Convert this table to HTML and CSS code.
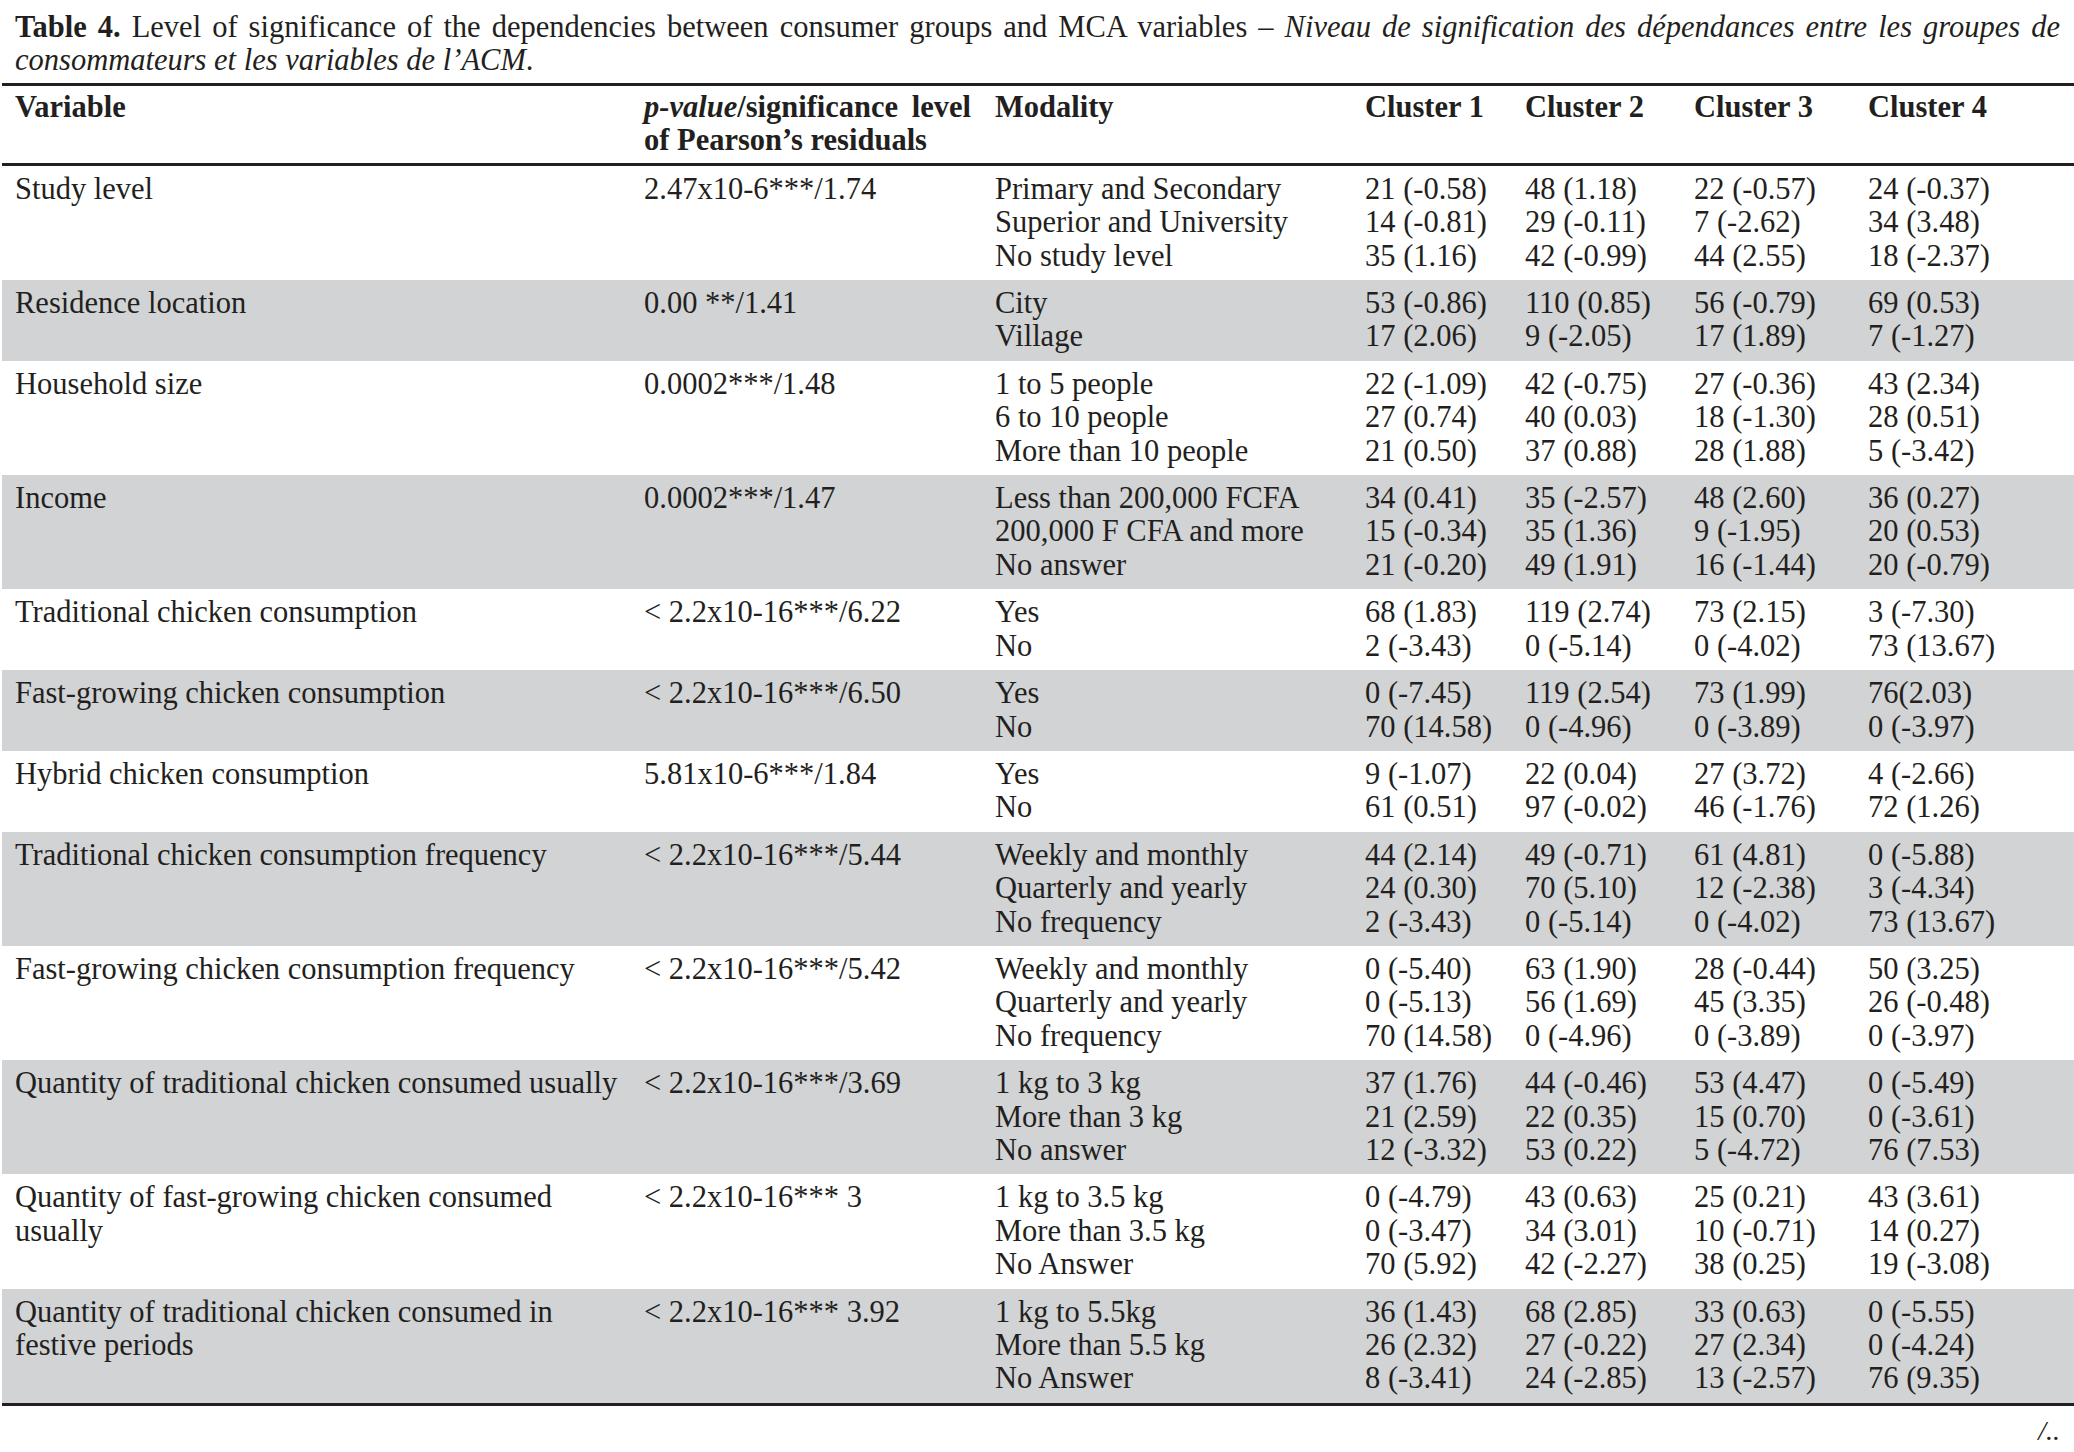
FILE: index.html
```html
<!DOCTYPE html>
<html lang="en">
<head>
<meta charset="utf-8">
<title>Table 4</title>
<link rel="stylesheet" href="styles.css">
</head>
<body>
<div class="page">
  <p class="caption"><b>Table 4.</b> <span>Level of significance of the dependencies between consumer groups and MCA variables –</span> <i>Niveau de signification des dépendances entre les groupes de</i> <i>consommateurs et les variables de l’ACM</i>.</p>
  <table class="data">
    <colgroup>
      <col class="c-var"><col class="c-p"><col class="c-mod"><col class="c-k1"><col class="c-k2"><col class="c-k3"><col class="c-k4">
    </colgroup>
    <thead>
      <tr>
        <th class="first">Variable</th>
        <th class="just"><i>p-value</i><span>/significance level</span> <span>of Pearson’s residuals</span></th>
        <th>Modality</th>
        <th>Cluster 1</th>
        <th>Cluster 2</th>
        <th>Cluster 3</th>
        <th>Cluster 4</th>
      </tr>
    </thead>
    <tbody>
      <tr>
        <td class="first">Study level</td>
        <td>2.47x10-6***/1.74</td>
        <td class="nw">Primary and Secondary<br>Superior and University<br>No study level</td>
        <td class="nw">21 (-0.58)<br>14 (-0.81)<br>35 (1.16)</td>
        <td class="nw">48 (1.18)<br>29 (-0.11)<br>42 (-0.99)</td>
        <td class="nw">22 (-0.57)<br>7 (-2.62)<br>44 (2.55)</td>
        <td class="nw">24 (-0.37)<br>34 (3.48)<br>18 (-2.37)</td>
      </tr>
      <tr class="shade">
        <td class="first">Residence location</td>
        <td>0.00 **/1.41</td>
        <td class="nw">City<br>Village</td>
        <td class="nw">53 (-0.86)<br>17 (2.06)</td>
        <td class="nw">110 (0.85)<br>9 (-2.05)</td>
        <td class="nw">56 (-0.79)<br>17 (1.89)</td>
        <td class="nw">69 (0.53)<br>7 (-1.27)</td>
      </tr>
      <tr>
        <td class="first">Household size</td>
        <td>0.0002***/1.48</td>
        <td class="nw">1 to 5 people<br>6 to 10 people<br>More than 10 people</td>
        <td class="nw">22 (-1.09)<br>27 (0.74)<br>21 (0.50)</td>
        <td class="nw">42 (-0.75)<br>40 (0.03)<br>37 (0.88)</td>
        <td class="nw">27 (-0.36)<br>18 (-1.30)<br>28 (1.88)</td>
        <td class="nw">43 (2.34)<br>28 (0.51)<br>5 (-3.42)</td>
      </tr>
      <tr class="shade">
        <td class="first">Income</td>
        <td>0.0002***/1.47</td>
        <td class="nw">Less than 200,000 FCFA<br>200,000 F CFA and more<br>No answer</td>
        <td class="nw">34 (0.41)<br>15 (-0.34)<br>21 (-0.20)</td>
        <td class="nw">35 (-2.57)<br>35 (1.36)<br>49 (1.91)</td>
        <td class="nw">48 (2.60)<br>9 (-1.95)<br>16 (-1.44)</td>
        <td class="nw">36 (0.27)<br>20 (0.53)<br>20 (-0.79)</td>
      </tr>
      <tr>
        <td class="first">Traditional chicken consumption</td>
        <td>&lt; 2.2x10-16***/6.22</td>
        <td class="nw">Yes<br>No</td>
        <td class="nw">68 (1.83)<br>2 (-3.43)</td>
        <td class="nw">119 (2.74)<br>0 (-5.14)</td>
        <td class="nw">73 (2.15)<br>0 (-4.02)</td>
        <td class="nw">3 (-7.30)<br>73 (13.67)</td>
      </tr>
      <tr class="shade">
        <td class="first">Fast-growing chicken consumption</td>
        <td>&lt; 2.2x10-16***/6.50</td>
        <td class="nw">Yes<br>No</td>
        <td class="nw">0 (-7.45)<br>70 (14.58)</td>
        <td class="nw">119 (2.54)<br>0 (-4.96)</td>
        <td class="nw">73 (1.99)<br>0 (-3.89)</td>
        <td class="nw">76(2.03)<br>0 (-3.97)</td>
      </tr>
      <tr>
        <td class="first">Hybrid chicken consumption</td>
        <td>5.81x10-6***/1.84</td>
        <td class="nw">Yes<br>No</td>
        <td class="nw">9 (-1.07)<br>61 (0.51)</td>
        <td class="nw">22 (0.04)<br>97 (-0.02)</td>
        <td class="nw">27 (3.72)<br>46 (-1.76)</td>
        <td class="nw">4 (-2.66)<br>72 (1.26)</td>
      </tr>
      <tr class="shade">
        <td class="first">Traditional chicken consumption frequency</td>
        <td>&lt; 2.2x10-16***/5.44</td>
        <td class="nw">Weekly and monthly<br>Quarterly and yearly<br>No frequency</td>
        <td class="nw">44 (2.14)<br>24 (0.30)<br>2 (-3.43)</td>
        <td class="nw">49 (-0.71)<br>70 (5.10)<br>0 (-5.14)</td>
        <td class="nw">61 (4.81)<br>12 (-2.38)<br>0 (-4.02)</td>
        <td class="nw">0 (-5.88)<br>3 (-4.34)<br>73 (13.67)</td>
      </tr>
      <tr>
        <td class="first">Fast-growing chicken consumption frequency</td>
        <td>&lt; 2.2x10-16***/5.42</td>
        <td class="nw">Weekly and monthly<br>Quarterly and yearly<br>No frequency</td>
        <td class="nw">0 (-5.40)<br>0 (-5.13)<br>70 (14.58)</td>
        <td class="nw">63 (1.90)<br>56 (1.69)<br>0 (-4.96)</td>
        <td class="nw">28 (-0.44)<br>45 (3.35)<br>0 (-3.89)</td>
        <td class="nw">50 (3.25)<br>26 (-0.48)<br>0 (-3.97)</td>
      </tr>
      <tr class="shade">
        <td class="first">Quantity of traditional chicken consumed usually</td>
        <td>&lt; 2.2x10-16***/3.69</td>
        <td class="nw">1 kg to 3 kg<br>More than 3 kg<br>No answer</td>
        <td class="nw">37 (1.76)<br>21 (2.59)<br>12 (-3.32)</td>
        <td class="nw">44 (-0.46)<br>22 (0.35)<br>53 (0.22)</td>
        <td class="nw">53 (4.47)<br>15 (0.70)<br>5 (-4.72)</td>
        <td class="nw">0 (-5.49)<br>0 (-3.61)<br>76 (7.53)</td>
      </tr>
      <tr>
        <td class="first"><span>Quantity of fast-growing chicken consumed</span> <span>usually</span></td>
        <td>&lt; 2.2x10-16*** 3</td>
        <td class="nw">1 kg to 3.5 kg<br>More than 3.5 kg<br>No Answer</td>
        <td class="nw">0 (-4.79)<br>0 (-3.47)<br>70 (5.92)</td>
        <td class="nw">43 (0.63)<br>34 (3.01)<br>42 (-2.27)</td>
        <td class="nw">25 (0.21)<br>10 (-0.71)<br>38 (0.25)</td>
        <td class="nw">43 (3.61)<br>14 (0.27)<br>19 (-3.08)</td>
      </tr>
      <tr class="shade">
        <td class="first"><span>Quantity of traditional chicken consumed in</span> <span>festive periods</span></td>
        <td>&lt; 2.2x10-16*** 3.92</td>
        <td class="nw">1 kg to 5.5kg<br>More than 5.5 kg<br>No Answer</td>
        <td class="nw">36 (1.43)<br>26 (2.32)<br>8 (-3.41)</td>
        <td class="nw">68 (2.85)<br>27 (-0.22)<br>24 (-2.85)</td>
        <td class="nw">33 (0.63)<br>27 (2.34)<br>13 (-2.57)</td>
        <td class="nw">0 (-5.55)<br>0 (-4.24)<br>76 (9.35)</td>
      </tr>
    </tbody>
  </table>
  <p class="cont">/..</p>
</div>
</body>
</html>
```

FILE: styles.css
```css
html, body {
  margin: 0;
  padding: 0;
  background: #ffffff;
}

.page {
  width: 2074px;
  padding-top: 11px;
  font-family: "Liberation Serif", "Times New Roman", serif;
  font-size: 30.5px;
  line-height: 33.4px;
  color: #231f20;
}

.caption {
  margin: 0 14px 6px 15px;
  line-height: 33px;
  text-align: justify;
}

.caption b {
  font-weight: bold;
}

.data {
  margin-left: 2px;
  width: 2072px;
  table-layout: fixed;
  border-collapse: collapse;
  border-top: 3px solid #231f20;
  border-bottom: 3px solid #231f20;
}

.c-var { width: 629px; }
.c-p { width: 351px; }
.c-mod { width: 370px; }
.c-k1 { width: 160px; }
.c-k2 { width: 169px; }
.c-k3 { width: 174px; }
.c-k4 { width: 219px; }

.data th,
.data td {
  text-align: left;
  vertical-align: top;
  padding: 7px 11px 7px 13px;
}

.data thead th {
  font-weight: bold;
  padding-top: 5px;
  padding-bottom: 5px;
  border-bottom: 3px solid #231f20;
}

.data th.just {
  text-align: justify;
}

.data .first {
  padding-right: 4px;
}

.data .nw {
  white-space: nowrap;
}

.data tr.shade td {
  background: #d1d3d4;
}

.cont {
  margin: 10px 14px 0 0;
  text-align: right;
  font-size: 28px;
  line-height: 30px;
  font-style: italic;
}
```
